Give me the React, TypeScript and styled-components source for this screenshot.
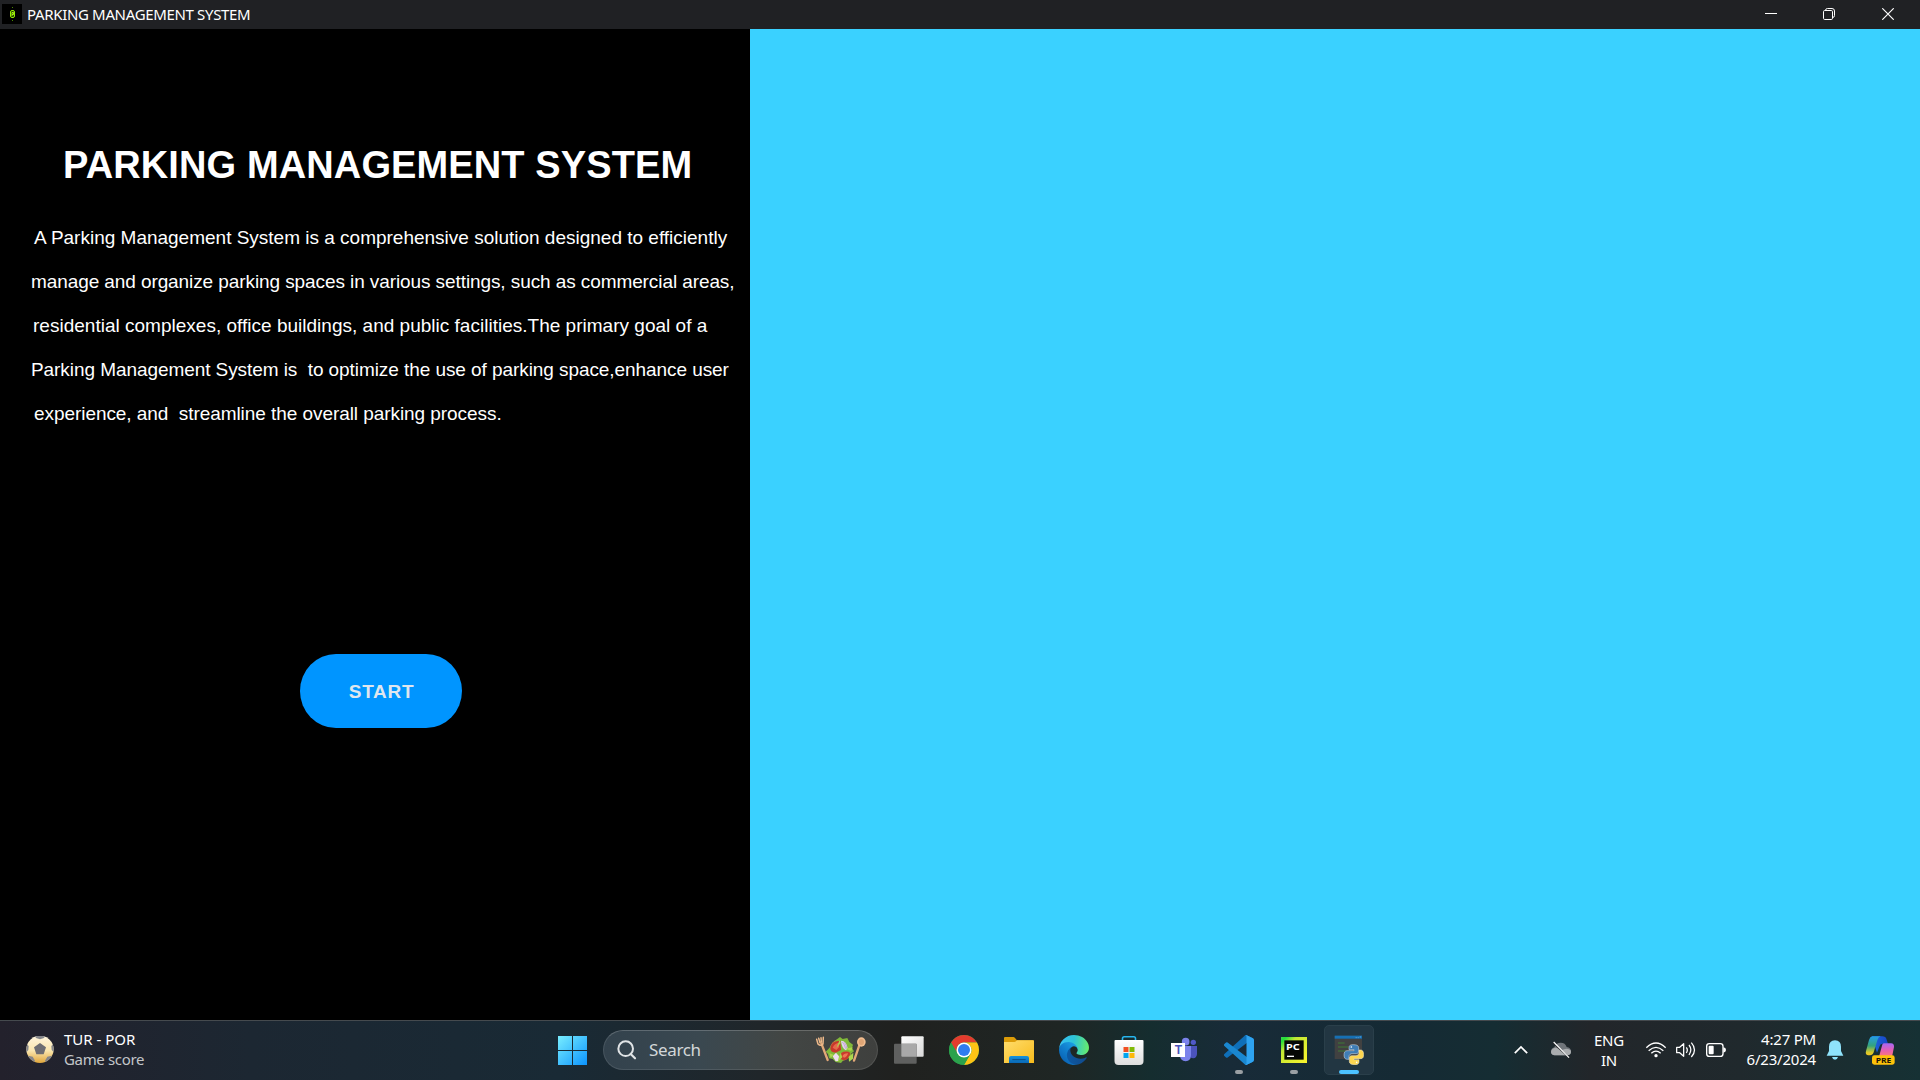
import React from "react";
import styled, { createGlobalStyle } from "styled-components";

const GlobalStyle = createGlobalStyle`
  * { box-sizing: border-box; }
  html, body { margin: 0; padding: 0; background: #000; overflow: hidden; }
`;

const Screen = styled.div`
  width: 1920px;
  height: 1080px;
  display: flex;
  flex-direction: column;
  font-family: "Noto Sans", "Open Sans", sans-serif;
`;

/* ---------- window ---------- */

const TitleBar = styled.header`
  flex: 0 0 29px;
  display: flex;
  align-items: center;
  background: #202124;
  padding-left: 2px;
`;

const AppIcon = styled.svg`
  width: 20px;
  height: 20px;
  margin-top: -1px;
  background: #000;
`;

const WindowTitle = styled.span`
  margin: -1px 0 0 5px;
  flex: 1;
  color: #fff;
  font-size: 15px;
  line-height: 27px;
  letter-spacing: -0.34px;
`;

const WindowButton = styled.button<{ $width: number }>`
  width: ${(p) => p.$width}px;
  height: 29px;
  padding: 0 0 1px;
  border: 0;
  background: none;
  display: flex;
  align-items: center;
  justify-content: center;
`;

const Content = styled.main`
  flex: 1;
  display: flex;
  min-height: 0;
`;

const InfoPanel = styled.section`
  width: 750px;
  display: flex;
  flex-direction: column;
  align-items: flex-start;
  background: #000;
  color: #fff;
  font-family: "Liberation Sans", Arial, sans-serif;
`;

const BluePanel = styled.section`
  flex: 1;
  background: #3ad1ff;
`;

const Heading = styled.h1`
  margin: 114px 0 0 63px;
  font-size: 38px;
  line-height: 44px;
  font-weight: 700;
  letter-spacing: 0.12px;
  white-space: nowrap;
`;

const Description = styled.div`
  margin-top: 29px;
  font-size: 19px;
  line-height: 44px;
`;

const Line = styled.p<{ $left: number; $spacing: number }>`
  margin: 0;
  padding-left: ${(p) => p.$left}px;
  letter-spacing: ${(p) => p.$spacing}px;
  white-space: pre;
`;

const StartButton = styled.button`
  margin: 218px 0 0 300px;
  width: 162px;
  height: 74px;
  padding: 1px 0 0 1px;
  border: 0;
  border-radius: 36px / 37px;
  background: #0095ff;
  color: #dfe6ee;
  font: 700 19px/73px "Liberation Sans", Arial, sans-serif;
  letter-spacing: 0.7px;
`;

/* ---------- taskbar ---------- */

const Taskbar = styled.footer`
  flex: 0 0 60px;
  display: grid;
  grid-template-columns: 545px auto 1fr;
  align-items: center;
  border-top: 1px solid #454a4e;
  padding-bottom: 1px;
  background: linear-gradient(
    90deg,
    #23212c 0,
    #1c2732 250px,
    #192a35 560px,
    #20262a 760px,
    #20211f 900px,
    #1f2624 1060px,
    #152d2f 1150px,
    #182b38 1230px,
    #152a34 1400px,
    #152d33 1495px,
    #22262a 1590px,
    #20292d 1740px,
    #163134 1920px
  );
  color: #fff;
`;

const Widget = styled.div`
  display: flex;
  align-items: center;
  padding-left: 26px;
  gap: 10px;
`;

const Stack = styled.div<{ $align?: string; $spacing?: number; $lift?: number }>`
  display: flex;
  flex-direction: column;
  text-align: ${(p) => p.$align ?? "left"};
  font-size: 15px;
  line-height: 20px;
  letter-spacing: ${(p) => p.$spacing ?? 0}px;
  margin-top: -${(p) => p.$lift ?? 0}px;
  white-space: nowrap;
`;

const Muted = styled.span`
  color: #c3c6c9;
  letter-spacing: -0.35px;
`;

const AppGroup = styled.nav`
  display: flex;
  align-items: center;
`;

const AppCell = styled.div<{ $active?: boolean }>`
  width: 50px;
  height: 50px;
  margin: 0 2.5px;
  position: relative;
  display: flex;
  align-items: center;
  justify-content: center;
  border-radius: 5px;
  border: 1px solid ${(p) => (p.$active ? "#2a3f4a" : "transparent")};
  background: ${(p) => (p.$active ? "#223642" : "transparent")};
`;

const Indicator = styled.i<{ $wide?: boolean }>`
  position: absolute;
  bottom: 0;
  left: 50%;
  width: ${(p) => (p.$wide ? 20 : 8)}px;
  height: 4px;
  border-radius: 2px;
  transform: translateX(-50%);
  background: ${(p) => (p.$wide ? "#4cc2ff" : "#9a9fa3")};
`;

const SearchBox = styled.div`
  width: 275px;
  height: 40px;
  margin: 0 3px;
  display: flex;
  align-items: center;
  border-radius: 20px;
  border: 1px solid rgba(255, 255, 255, 0.1);
  border-top-color: rgba(255, 255, 255, 0.2);
  background: linear-gradient(90deg, #33424d, #3a4850 35%, #424644 65%, #3f403e);
  background-origin: border-box;
  padding: 0 10px 0 13px;
`;

const SearchLabel = styled.span`
  flex: 1;
  margin-left: 12px;
  font-size: 17px;
  line-height: 36px;
  letter-spacing: -0.35px;
  color: #d3d7d9;
`;

const Tray = styled.div`
  display: flex;
  align-items: center;
  justify-content: flex-end;
  padding-right: 14px;
`;

const TrayCell = styled.div<{ $width: number; $align?: string }>`
  width: ${(p) => p.$width}px;
  display: flex;
  align-items: center;
  justify-content: ${(p) => p.$align ?? "center"};
`;

const Svg = styled.svg`
  display: block;
  flex: none;
`;

const SoccerBall = () => (
  <Svg width="28" height="28" viewBox="77 77 84 84">
    <defs>
      <linearGradient id="ball" x1="0" y1="0" x2="0" y2="1">
        <stop offset="0" stopColor="#fff5de" />
        <stop offset=".55" stopColor="#fae6ae" />
        <stop offset="1" stopColor="#e0a63c" />
      </linearGradient>
      <clipPath id="ballClip"><circle cx="119" cy="117" r="41" /></clipPath>
    </defs>
    <circle cx="119" cy="117" r="41" fill="url(#ball)" />
    <g clipPath="url(#ballClip)">
      <path d="M119 98l18 13-7 21h-22l-7-21z" fill="#6d6d72" />
      <path d="M102 74h34l-5 9-12 4-12-4zM76 98l9 9-1 12-8 9zM162 98l-9 9 1 12 8 9zM84 136l13 3 7 12-2 10-20-13zM154 136l-13 3-7 12 2 10 20-13z" fill="#85868a" />
    </g>
  </Svg>
);

const StartLogo = () => (
  <Svg width="30" height="30" viewBox="0.500 0 30 30">
    <defs>
      <linearGradient id="win" x1="0" y1="0" x2="1" y2="1" gradientUnits="objectBoundingBox">
        <stop offset="0" stopColor="#7bf0ff" />
        <stop offset="1" stopColor="#0b93fd" />
      </linearGradient>
      <clipPath id="winClip">
        <path d="M.5 1h14v14h-14zM15.500 1h14v14h-14zM.5 16h14v14h-14zM15.500 16h14v14h-14z" />
      </clipPath>
    </defs>
    <rect width="30" height="30" fill="url(#win)" clipPath="url(#winClip)" />
  </Svg>
);

const Magnifier = () => (
  <Svg width="20" height="20" viewBox="232 91 60 60">
    <circle cx="258" cy="117" r="22" fill="none" stroke="#e1e4e6" strokeWidth="6" />
    <path d="M273 133l13 13" stroke="#e1e4e6" strokeWidth="6.500" strokeLinecap="round" />
  </Svg>
);

const Salad = () => (
  <Svg width="52" height="28" viewBox="45 36 156 84">
    <path d="M64 58l19 50" stroke="#e2a878" strokeWidth="7" strokeLinecap="round" />
    <path d="M50 46l4 14q8 8 15 0l1-20M56 43l4 13M63 41l1 13" fill="none" stroke="#eeb98a" strokeWidth="4.500" strokeLinecap="round" />
    <path d="M180 58l-18 52" stroke="#e2a878" strokeWidth="7" strokeLinecap="round" />
    <ellipse cx="184" cy="54" rx="13" ry="14" fill="#f0bd90" />
    <ellipse cx="184" cy="54" rx="8" ry="9" fill="#dfa575" />
    <circle cx="122" cy="78" r="33" fill="#c87a48" />
    <path d="M108 48l12-9 8 6 14-3 6 12 11 8-3 10 6 10-9 7-4 13-14 1-12 14-16-3-9-9-11-2-3-13-7-7 9-9z" fill="#80b83a" />
    <path d="M91 72q4-22 30-22l2 28-16 8q-16 0-16-14z" fill="#c8382b" />
    <path d="M98 71q5-14 20-15l-1 14-8 8z" fill="#e8684c" />
    <path d="M120 98q0-18 26-15l5 4q-3 20-19 21-12-1-12-10z" fill="#c93a2c" />
    <path d="M127 97q3-9 17-9-3 12-12 13z" fill="#ef7553" />
    <path d="M123 50q17 0 20 23l-5 6q-13-6-15-29z" fill="#e3d4ed" />
    <path d="M127 54q7 7 10 20M133 55q7 8 7 17" fill="none" stroke="#a57bb8" strokeWidth="1.500" />
    <path d="M98 97l10-11 9 11-2 14-8 1z" fill="#efdfef" />
    <path d="M119 48l-10 24 13-15zM158 70l-22 4 18 7zM88 88l13 4-9 10zM122 86l-9 27 14-13zM146 98l14-12-1 18-12 9z" fill="#acd74d" />
  </Svg>
);

const TaskView = () => (
  <Svg width="30" height="28" viewBox="42 78 90 84">
    <defs>
      <linearGradient id="tv" x1="0" y1="0" x2="1" y2="1">
        <stop offset="0" stopColor="#fff" />
        <stop offset="1" stopColor="#d9d9d9" />
      </linearGradient>
    </defs>
    <rect x="64" y="79" width="67" height="61" rx="3" fill="url(#tv)" />
    <rect x="42" y="101" width="68" height="60" rx="3" fill="#5f605f" />
    <path d="M64 101h46v39H67q-3 0-3-3z" fill="#a9a9a9" />
  </Svg>
);

const Chrome = () => (
  <Svg width="30" height="30" viewBox="-15 -15 30 30">
    <circle r="15" fill="#2ba24c" />
    <path d="M-12.990-7.500A15 15 0 0 1 12.990-7.500L0-7.500A7.500 7.500 0 0 0-6.500 3.750z" fill="#e33b2e" />
    <path d="M12.990-7.500A15 15 0 0 1 0 15L6.500 3.750A7.500 7.500 0 0 0 0-7.500z" fill="#fdc315" />
    <path d="M0 15L6.500 3.750H-6.500L-12.990-7.500A15 15 0 0 0 0 15z" fill="#2ba24c" />
    <circle r="7.500" fill="#fff" />
    <circle r="6" fill="#2e7cf0" />
  </Svg>
);

const Explorer = () => (
  <Svg width="30" height="30" viewBox="372 75 90 90">
    <defs>
      <linearGradient id="fold" x1="0" y1="0" x2="1" y2="1">
        <stop offset="0" stopColor="#ffdd6c" />
        <stop offset="1" stopColor="#f8bb1c" />
      </linearGradient>
      <linearGradient id="foldBlue" x1="0" y1="0" x2="0" y2="1">
        <stop offset="0" stopColor="#1493df" />
        <stop offset="1" stopColor="#0a68b5" />
      </linearGradient>
    </defs>
    <path d="M372 84q0-3 3-3h25q3 0 5 3l6 7h48q3 0 3 3v30h-90z" fill="#dc9c08" />
    <path d="M372 96h31q3 0 5-2l3-3h48q3 0 3 3v65h-90z" fill="url(#fold)" />
    <path d="M387 159v-15q0-6 6-6h48q6 0 6 6v15z" fill="url(#foldBlue)" />
    <path d="M397 149h40" stroke="#0b4c86" strokeWidth="3" />
  </Svg>
);

const Edge = () => (
  <Svg width="30" height="30" viewBox="0 0 256 256">
    <defs>
      <linearGradient id="e1" x1="63" y1="177" x2="241" y2="177" gradientUnits="userSpaceOnUse">
        <stop offset="0" stopColor="#0c59a4" />
        <stop offset="1" stopColor="#114a8b" />
      </linearGradient>
      <linearGradient id="e2" x1="157" y1="99" x2="46" y2="220" gradientUnits="userSpaceOnUse">
        <stop offset="0" stopColor="#1b9de2" />
        <stop offset=".5" stopColor="#1180cf" />
        <stop offset="1" stopColor="#0b67b8" />
      </linearGradient>
      <linearGradient id="e3" x1="20" y1="70" x2="250" y2="100" gradientUnits="userSpaceOnUse">
        <stop offset="0" stopColor="#35c1f1" />
        <stop offset=".45" stopColor="#2ec3d6" />
        <stop offset="1" stopColor="#66eb6e" />
      </linearGradient>
    </defs>
    <path fill="url(#e1)" d="M231 190.500c-3.400 1.800-6.900 3.400-10.500 4.700a101.700 101.700 0 0 1-35.900 6.500c-47.300 0-88.500-32.500-88.500-74.300a31.500 31.500 0 0 1 16.400-27.300c-42.800 1.800-53.800 46.400-53.800 72.500 0 74 68.100 81.400 82.800 81.400 7.900 0 19.800-2.300 27-4.600l1.300-.4a128.300 128.300 0 0 0 66.600-52.800 4 4 0 0 0-5.400-5.700z" />
    <path fill="url(#e2)" d="M105.700 241.400a79.200 79.200 0 0 1-22.700-21.300 80.700 80.700 0 0 1 29.500-120c3.200-1.500 8.500-4.200 15.600-4.100a32.400 32.400 0 0 1 25.700 13 31.900 31.900 0 0 1 6.300 18.700c0-.2 24.500-79.600-80-79.600-43.900 0-80 41.700-80 78.200a130.200 130.200 0 0 0 12.100 56 128 128 0 0 0 156.400 67.100 75.500 75.500 0 0 1-62.800-8z" />
    <path fill="url(#e3)" d="M152.300 148.900c-.9 1-3.400 2.500-3.400 5.600 0 2.600 1.700 5.200 4.800 7.300 14.300 10 41.400 8.600 41.500 8.600a59.600 59.600 0 0 0 30.300-8.300 61.400 61.400 0 0 0 30.400-52.900c.3-22.400-8-37.300-11.300-43.900C223.500 23.900 177.700 0 128 0A128 128 0 0 0 0 126.200c.5-36.500 36.800-66 80-66 3.500 0 23.500.3 42 10a72.600 72.600 0 0 1 30.900 29.300c6.100 10.600 7.200 24.100 7.200 29.500 0 5.300-2.700 13.300-7.800 19.900z" />
  </Svg>
);

const Store = () => (
  <Svg width="30" height="32" viewBox="0 0 30 32">
    <defs>
      <linearGradient id="bag" x1="0" y1="0" x2="0" y2="1">
        <stop offset="0" stopColor="#fff" />
        <stop offset="1" stopColor="#dedede" />
      </linearGradient>
    </defs>
    <path d="M8.500 8.500V4.500q0-1.700 1.700-1.700h9.600q1.700 0 1.700 1.700v4" fill="none" stroke="#27b5ee" strokeWidth="1.600" />
    <path d="M.5 7q0-1 1-1h27q1 0 1 1v20q0 4-4 4h-21q-4 0-4-4z" fill="url(#bag)" />
    <path d="M9.500 13h5v5h-5z" fill="#f05022" />
    <path d="M15.500 13h5v5h-5z" fill="#80ba06" />
    <path d="M9.500 19h5v5h-5z" fill="#02a4ef" />
    <path d="M15.500 19h5v5h-5z" fill="#fdb90b" />
  </Svg>
);

const TeamsLetter = styled.text`
  font: 700 36px "Liberation Sans", Arial, sans-serif;
`;

const Teams = () => (
  <Svg width="28" height="30" viewBox="120 75 84 90">
    <circle cx="190" cy="97" r="8" fill="#5059c9" />
    <path d="M178 108h23v24q-1 12-11 13-12-1-12-12z" fill="#4b53bc" />
    <circle cx="167" cy="95" r="11.500" fill="#7b83eb" />
    <path d="M150 108h33v27q0 17-16 19-17-2-17-19z" fill="#7b83eb" />
    <rect x="123" y="99" width="42" height="42" fill="#fff" />
    <TeamsLetter x="145" y="133" textAnchor="middle" fill="#4b53bc">T</TeamsLetter>
  </Svg>
);

const VsCode = () => (
  <Svg width="30" height="30" viewBox="0 0 100 100">
    <path d="M96.500 10.800L75.900.9a6.200 6.200 0 0 0-7.100 1.200L1.300 63.600a4.200 4.200 0 0 0 0 6.200l5.500 5a4.200 4.200 0 0 0 5.300.2l81.300-61.600c2.700-2.100 6.600-.1 6.600 3.300v-.3a6.200 6.200 0 0 0-3.500-5.600z" fill="#0f6fb8" />
    <path d="M96.500 89.200l-20.600 9.900a6.200 6.200 0 0 1-7.100-1.200L1.300 36.400a4.200 4.200 0 0 1 0-6.200l5.500-5a4.200 4.200 0 0 1 5.300-.2l81.300 61.600c2.700 2.100 6.600.1 6.600-3.300v.3a6.200 6.200 0 0 1-3.500 5.600z" fill="#1a87d0" />
    <path d="M75.900 99.100a6.200 6.200 0 0 1-7.100-1.200c2.300 2.300 6.200.7 6.200-2.600V4.700c0-3.300-3.900-4.900-6.200-2.600a6.200 6.200 0 0 1 7.100-1.200l20.600 9.900a6.200 6.200 0 0 1 3.500 5.600v67.200a6.200 6.200 0 0 1-3.500 5.600z" fill="#2ea3f0" />
  </Svg>
);

const PyCharmLetters = styled.text`
  font: 700 28px "Noto Sans", "Open Sans", sans-serif;
`;

const PyCharm = () => (
  <Svg width="26" height="26" viewBox="453 81 78 78">
    <defs>
      <linearGradient id="pc" x1="0" y1="0" x2="1" y2="1">
        <stop offset="0" stopColor="#3fd84e" />
        <stop offset=".1" stopColor="#21e03a" />
        <stop offset=".3" stopColor="#c3e834" />
        <stop offset="1" stopColor="#fbf42d" />
      </linearGradient>
    </defs>
    <path d="M453 81h78v78h-78z" fill="url(#pc)" />
    <path d="M463 91h58v58h-58z" fill="#050805" />
    <PyCharmLetters x="468" y="120" textLength="41" lengthAdjust="spacingAndGlyphs" fill="#fff">PC</PyCharmLetters>
    <path d="M471 137h21v4h-21z" fill="#fff" />
  </Svg>
);

const PythonWindow = () => (
  <Svg width="30" height="30" viewBox="43 46 90 90">
    <path d="M45 48h82v70H45z" fill="#414141" />
    <path d="M45 48h82v9H45z" fill="#1670b4" />
    <path d="M108 54h3M114 54h3M120 52h4" stroke="#8fc0e6" strokeWidth="2" />
    <path d="M55 70h20M55 82h30M55 94h22" stroke="#3f7a36" strokeWidth="3" />
    <path d="M102 75c-13 0-14 5-14 9v6h15v3H82c-6 0-9 5-9 13 0 9 4 13 9 13h6v-8c0-6 5-9 9-9h13c4 0 7-3 7-8V84c0-6-6-9-15-9z" fill="#3f7db5" stroke="#dfe9f0" strokeWidth="1.500" />
    <path d="M104 135c13 0 14-5 14-9v-6h-15v-3h21c6 0 8-5 8-13 0-9-4-13-9-13h-5v8c0 6-5 9-9 9H96c-4 0-7 3-7 8v10c0 6 6 9 15 9z" fill="#fdd650" stroke="#f4efd8" strokeWidth="1.500" />
    <circle cx="95" cy="82" r="2.500" fill="#fff" />
    <circle cx="111" cy="128" r="2.500" fill="#fff" />
  </Svg>
);

const CloudOff = () => (
  <Svg width="22" height="18" viewBox="180 94 66 54">
    <path d="M194 137q-11-1-11-12 0-9 10-12 4-14 19-14 14 0 18 13 13 2 13 13 0 11-11 12z" fill="#70757a" />
    <path d="M194 137q-11-1-11-11 2-11 13-12 9-1 19 8 12-8 25-2 3 2 3 6 0 10-11 11z" fill="#a9acae" />
    <path d="M188 99l52 47" stroke="#23272a" strokeWidth="4" />
    <path d="M191 97l46 47" stroke="#fff" strokeWidth="3.500" />
  </Svg>
);

const Wifi = () => (
  <Svg width="22" height="18" viewBox="465 92 66 54">
    <g fill="none" stroke="#fff" strokeWidth="4">
      <path d="M469 112q29-28 58 0" />
      <path d="M476 121q22-20 44 0" />
      <path d="M484 129q14-13 28 0" />
    </g>
    <circle cx="498" cy="136" r="5" fill="#fff" />
  </Svg>
);

const Volume = () => (
  <Svg width="22" height="18" viewBox="555 93 66 54">
    <g fill="none" stroke="#fff" strokeWidth="3.800" strokeLinejoin="round">
      <path d="M560 112h9l12-11v38l-12-11h-9z" />
      <path d="M589 112q6 8 0 17M597 105q11 14 0 30M604 98q19 22 0 43" />
    </g>
  </Svg>
);

const Battery = () => (
  <Svg width="22" height="16" viewBox="645 96 66 48">
    <rect x="650" y="101" width="49" height="38" rx="8" fill="none" stroke="#fff" strokeWidth="4" />
    <rect x="656" y="107" width="15" height="26" rx="3" fill="#fff" />
    <path d="M700 112q8 1 8 8t-8 8z" fill="#fff" />
  </Svg>
);

const Bell = () => (
  <Svg width="18" height="20" viewBox="318 91 54 60">
    <path d="M345 92q18 1 18 19v13l7 14H320l7-14v-13q0-18 18-19z" fill="#8fe3fb" />
    <path d="M336 142h18q-2 8-9 8t-9-8z" fill="#8fe3fb" />
  </Svg>
);

const PreText = styled.text`
  font: 700 22px "Noto Sans", "Open Sans", sans-serif;
`;

const Copilot = () => (
  <Svg width="30" height="30" viewBox="436 77 90 90">
    <defs>
      <linearGradient id="c1" x1="0" y1="0" x2="0" y2="1">
        <stop offset="0" stopColor="#249ce8" />
        <stop offset=".5" stopColor="#34a37b" />
        <stop offset=".85" stopColor="#d9c92b" />
        <stop offset="1" stopColor="#f3c51e" />
      </linearGradient>
      <linearGradient id="c2" x1="0" y1="0" x2="0" y2="1">
        <stop offset="0" stopColor="#a667f5" />
        <stop offset=".5" stopColor="#e55fb4" />
        <stop offset="1" stopColor="#ff7a72" />
      </linearGradient>
      <linearGradient id="c3" x1="0" y1="0" x2="1" y2="0">
        <stop offset="0" stopColor="#1e67da" />
        <stop offset="1" stopColor="#1746c8" />
      </linearGradient>
    </defs>
    <path d="M456 81h32q10 0 13 10l4 12h-16q-7 0-9 7l-8 20z" fill="url(#c3)" />
    <path d="M458 81h25q-7 2-10 12l-11 36q-3 9-11 9h-6q-9-2-6-13l9-33q3-10 10-11z" fill="url(#c1)" />
    <path d="M492 102h22q10 1 9 11l-6 30h-38q-1-3 1-8l7-26q1-6 5-7z" fill="url(#c2)" />
    <rect x="457" y="138" width="68" height="28" rx="7" fill="#fdc20a" />
    <PreText x="468" y="160" textLength="47" lengthAdjust="spacingAndGlyphs" fill="#1b1605">PRE</PreText>
  </Svg>
);

const lines = [
  { left: 34, spacing: -0.005, text: "A Parking Management System is a comprehensive solution designed to efficiently" },
  { left: 31, spacing: -0.09, text: "manage and organize parking spaces in various settings, such as commercial areas," },
  { left: 33, spacing: 0.01, text: "residential complexes, office buildings, and public facilities.The primary goal of a" },
  { left: 31, spacing: -0.07, text: "Parking Management System is  to optimize the use of parking space,enhance user" },
  { left: 34, spacing: -0.06, text: "experience, and  streamline the overall parking process." },
];

export default function App() {
  return (
    <Screen>
      <GlobalStyle />
      <TitleBar>
        <AppIcon viewBox="0 0 20 20">
          <rect x="8.500" y="6.500" width="4" height="7" rx="1.500" fill="#243c00" stroke="#93f000" />
          <path d="M10 12V8.500h1.500V10.500H10" fill="none" stroke="#b6ff1a" strokeWidth=".9" />
          <path d="M10 3h1v1h-1zM10 16h1v1h-1z" fill="#4a8a00" />
        </AppIcon>
        <WindowTitle>PARKING MANAGEMENT SYSTEM</WindowTitle>
        <WindowButton $width={62} aria-label="Minimize">
          <Svg width="12" height="12" viewBox="0 0 12 12">
            <path d="M0 5.500h12" stroke="#fff" />
          </Svg>
        </WindowButton>
        <WindowButton $width={54} aria-label="Restore">
          <Svg width="12" height="12" viewBox="0 0 12 12" fill="none" stroke="#fff">
            <rect x=".5" y="2.500" width="9" height="9" rx="1.200" />
            <path d="M2.500 2.200Q2.700.5 4.500.5H9q2.500 0 2.500 2.500v4.500q0 1.800-1.700 2" />
          </Svg>
        </WindowButton>
        <WindowButton $width={64} aria-label="Close">
          <Svg width="12" height="12" viewBox="0 0 12 12">
            <path d="M.3.300l11.400 11.400M11.700.300L.300 11.700" stroke="#fff" strokeWidth="1.150" />
          </Svg>
        </WindowButton>
      </TitleBar>

      <Content>
        <InfoPanel>
          <Heading>PARKING MANAGEMENT SYSTEM</Heading>
          <Description>
            {lines.map((line) => (
              <Line key={line.text} $left={line.left} $spacing={line.spacing}>
                {line.text}
              </Line>
            ))}
          </Description>
          <StartButton>START</StartButton>
        </InfoPanel>
        <BluePanel />
      </Content>

      <Taskbar>
        <Widget>
          <SoccerBall />
          <Stack $lift={2}>
            <span>TUR - POR</span>
            <Muted>Game score</Muted>
          </Stack>
        </Widget>
        <AppGroup>
          <AppCell><StartLogo /></AppCell>
          <SearchBox>
            <Magnifier />
            <SearchLabel>Search</SearchLabel>
            <Salad />
          </SearchBox>
          <AppCell><TaskView /></AppCell>
          <AppCell><Chrome /></AppCell>
          <AppCell><Explorer /></AppCell>
          <AppCell><Edge /></AppCell>
          <AppCell><Store /></AppCell>
          <AppCell><Teams /></AppCell>
          <AppCell><VsCode /><Indicator /></AppCell>
          <AppCell><PyCharm /><Indicator /></AppCell>
          <AppCell $active><PythonWindow /><Indicator $wide /></AppCell>
        </AppGroup>
        <Tray>
          <TrayCell $width={40}>
            <Svg width="16" height="10" viewBox="0 0 16 10">
              <path d="M1.800 8.200L8 2l6.200 6.200" fill="none" stroke="#fff" strokeWidth="1.700" />
            </Svg>
          </TrayCell>
          <TrayCell $width={40}><CloudOff /></TrayCell>
          <TrayCell $width={56}>
            <Stack $align="center" $spacing={-0.2}>
              <span>ENG</span>
              <span>IN</span>
            </Stack>
          </TrayCell>
          <TrayCell $width={38}><Wifi /></TrayCell>
          <TrayCell $width={22}><Volume /></TrayCell>
          <TrayCell $width={38}><Battery /></TrayCell>
          <TrayCell $width={81} $align="flex-end">
            <Stack $align="right" $spacing={-0.2} $lift={2}>
              <span>4:27 PM</span>
              <span>6/23/2024</span>
            </Stack>
          </TrayCell>
          <TrayCell $width={38}><Bell /></TrayCell>
          <TrayCell $width={52}><Copilot /></TrayCell>
        </Tray>
      </Taskbar>
    </Screen>
  );
}
